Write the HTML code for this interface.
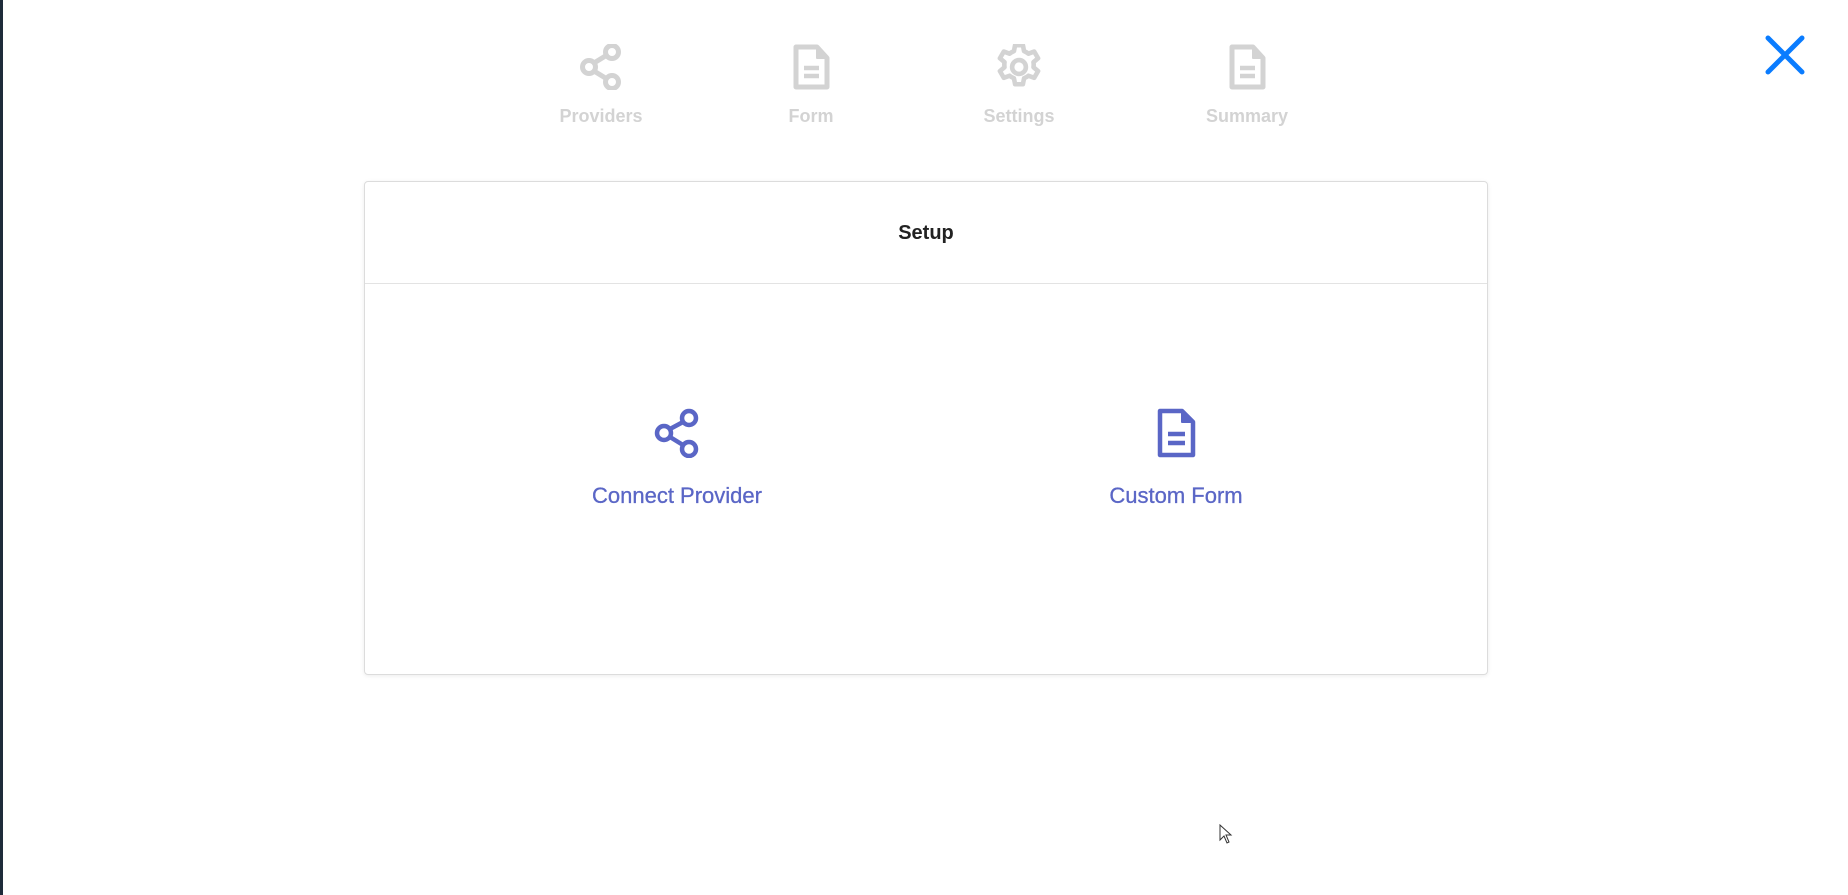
<!DOCTYPE html>
<html><head><meta charset="utf-8"><style>
html,body{margin:0;padding:0;width:1848px;height:895px;background:#fff;overflow:hidden;font-family:"Liberation Sans",Arial,sans-serif;position:relative}
.lb{position:absolute;left:0;top:0;width:3px;height:895px;background:#1e2b3a}
.step{position:absolute;top:44px;width:160px;text-align:center;color:#d3d3d3;font-weight:bold;font-size:18px}
.step svg{display:block;margin:0 auto 16px}
.card{position:absolute;left:364px;top:181px;width:1122px;height:492px;border:1px solid #dcdcdc;border-radius:4px;box-shadow:0 1px 4px rgba(0,0,0,.08)}
.hd{height:101px;border-bottom:1px solid #e3e3e3;text-align:center;line-height:103px;font-weight:bold;font-size:20px;color:#222}
.opt{position:absolute;top:226px;width:300px;text-align:center;color:#5a66c6;font-size:22px;-webkit-text-stroke:0.3px #5a66c6}
.opt svg{display:block;margin:0 auto 25px}
</style></head><body>
<div class="lb"></div>
<svg style="position:absolute;left:1765px;top:35px" width="40" height="40" viewBox="0 0 40 40"><path d="M3 3L37 37M37 3L3 37" stroke="#0a7cff" stroke-width="5" stroke-linecap="round"/></svg>

<div class="step" style="left:521px"><svg width="44" height="46" viewBox="0 0 44 46" fill="none" stroke="#d3d3d3" stroke-width="5"><circle cx="10" cy="23" r="6.5"/><circle cx="33" cy="8" r="6.5"/><circle cx="33" cy="38" r="6.5"/><path d="M15 19L28 11M15 27L28 35"/></svg>Providers</div>
<div class="step" style="left:731px"><svg width="44" height="46" viewBox="0 0 44 46" fill="none" stroke="#d3d3d3" stroke-width="5" stroke-linejoin="round"><path d="M7 3H28L38 14V43H7Z"/><path d="M28 3V14H38" fill="#d3d3d3" stroke-width="2"/><path d="M15 24H30M15 32H30" stroke-width="4.5"/></svg>Form</div>
<div class="step" style="left:939px"><svg width="46" height="46" viewBox="2 2 20 20" fill="none" stroke="#d3d3d3" stroke-width="2" stroke-linejoin="round"><path d="M10.3 2.5h3.4l.5 2.6a7.5 7.5 0 0 1 1.9 1.1l2.5-.9 1.7 2.9-2 1.7a7.5 7.5 0 0 1 0 2.2l2 1.7-1.7 2.9-2.5-.9a7.5 7.5 0 0 1-1.9 1.1l-.5 2.6h-3.4l-.5-2.6a7.5 7.5 0 0 1-1.9-1.1l-2.5.9-1.7-2.9 2-1.7a7.5 7.5 0 0 1 0-2.2l-2-1.7 1.7-2.9 2.5.9a7.5 7.5 0 0 1 1.9-1.1z"/><circle cx="12" cy="12" r="3"/></svg>Settings</div>
<div class="step" style="left:1167px"><svg width="44" height="46" viewBox="0 0 44 46" fill="none" stroke="#d3d3d3" stroke-width="5" stroke-linejoin="round"><path d="M7 3H28L38 14V43H7Z"/><path d="M28 3V14H38" fill="#d3d3d3" stroke-width="2"/><path d="M15 24H30M15 32H30" stroke-width="4.5"/></svg>Summary</div>

<div class="card"><div class="hd">Setup</div>
<div class="opt" style="left:162px"><svg width="50" height="50" viewBox="0 0 50 50" fill="none" stroke="#5a66c6" stroke-width="4.5"><circle cx="12" cy="25" r="7"/><circle cx="37" cy="10" r="7"/><circle cx="37" cy="41" r="7"/><path d="M18 21L31 14M18 29L31 37"/></svg>Connect Provider</div>
<div class="opt" style="left:661px"><svg width="50" height="50" viewBox="0 0 44 50" fill="none" stroke="#5a66c6" stroke-width="4.5" stroke-linejoin="round"><path d="M6 3H28L39 14V47H6Z"/><path d="M28 3V14H39" fill="#5a66c6" stroke-width="2"/><path d="M14 26H31M14 35H31" stroke-width="4.5"/></svg>Custom Form</div>
</div>
<svg style="position:absolute;left:1219px;top:824px" width="14" height="20" viewBox="0 0 14 20"><path d="M1 1V16L5 12L8 19L10 18L7 11H12Z" fill="#fff" stroke="#333" stroke-width="1"/></svg>
</body></html>
